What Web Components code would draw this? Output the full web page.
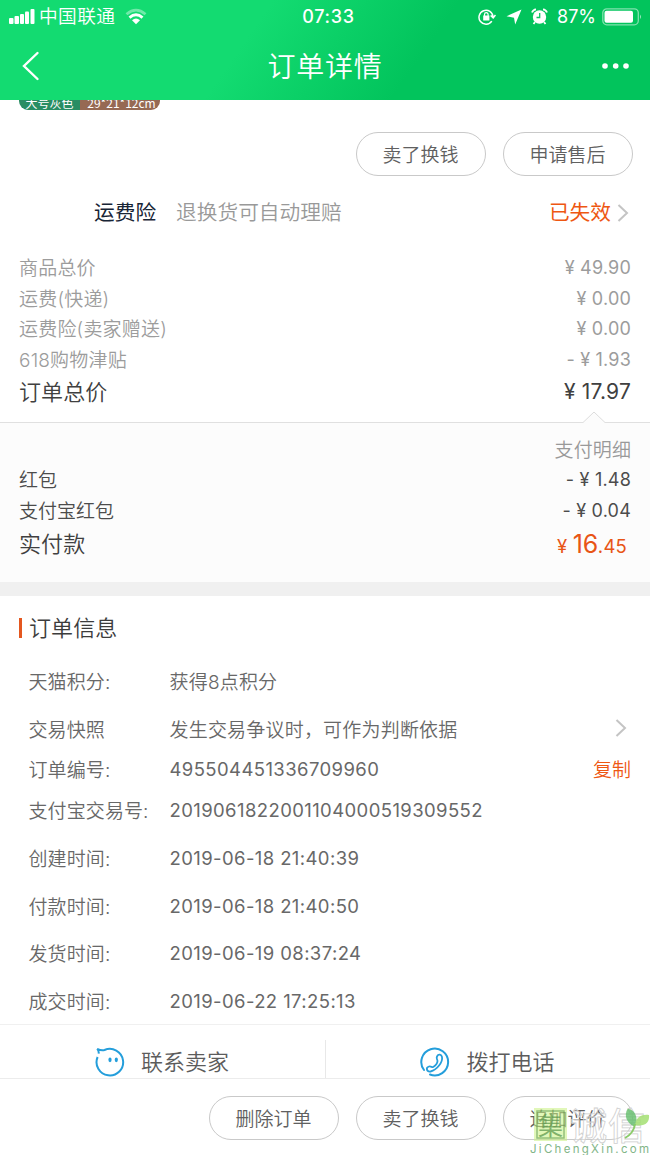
<!DOCTYPE html>
<html lang="zh-CN">
<head>
<meta charset="utf-8">
<title>订单详情</title>
<style>
  body {
    margin: 0;
    width: 650px;
    height: 1155px;
    overflow: hidden;
    background: #fff;
    color: #666;
    font-family: Inter, "Noto Sans CJK SC", sans-serif;
    font-weight: 350;
    font-size: 18px;
  }
</style>
</head>
<body>
<order-page></order-page>

<script>
// Attach an open shadow root with the given markup
function render(el, html) {
  el.attachShadow({ mode: "open" }).innerHTML = html;
}

class StatusBar extends HTMLElement {
  constructor() {
    super();
    render(this, `
      <style>
        :host {
          display: grid;
          grid-template-columns: 1fr auto 1fr;
          align-items: center;
          height: 32px;
          padding: 0 8px 0 9px;
          color: #fff;
          font-size: 18px;
          line-height: 32px;
        }
        div { display: flex; align-items: center; }
        .carrier { margin-left: 4px; font-size: 18.7px; letter-spacing: .4px; }
        .wifi { margin-left: 10px; }
        .time { font-weight: 500; letter-spacing: .7px; padding-left: 6px; padding-top: 1px; }
        .right { justify-content: flex-end; }
        .percent { margin: 1px 6px 0 9px; font-weight: 400; letter-spacing: 0; }
        svg { display: block; flex: none; }
      </style>
      <div>
        <svg width="26" height="17" fill="#fff">
          <rect x="0" y="10" width="4.5" height="6" rx="1"/>
          <rect x="5.5" y="8" width="4.5" height="8" rx="1"/>
          <rect x="11" y="6" width="4" height="10" rx="1"/>
          <rect x="16" y="3.500" width="4" height="12.500" rx="1"/>
          <rect x="21.500" y="1" width="4" height="15" rx="1"/>
        </svg>
        <span class="carrier">中国联通</span>
        <svg class="wifi" width="22" height="17" viewBox="0 0 22 17" fill="none" stroke="#fff" stroke-width="2.800">
          <path d="M1.500 6.200Q11 -2 20.500 6.200" opacity=".4"/>
          <path d="M4.500 9.600Q11 3.800 17.500 9.600"/>
          <path d="M7 12.200Q11 8.800 15 12.200L11 16.200Z" fill="#fff" stroke="none"/>
        </svg>
      </div>
      <div class="time">07:33</div>
      <div class="right">
        <svg width="18" height="18" viewBox="0 0 18 18" fill="none" stroke="#fff" stroke-width="1.500">
          <path d="M13.800 13.200A7 7 0 1 1 15 9M12.600 7.500L15.200 9.800L17.500 7"/>
          <rect x="5.200" y="7.500" width="6.200" height="5" fill="#fff" stroke="none"/>
          <path d="M6.500 8V6.500a1.800 1.800 0 0 1 3.600 0V8" stroke-width="1.200"/>
        </svg>
        <svg width="16" height="16" viewBox="0 0 16 16" fill="#fff" style="margin-left:10px"><path d="M15.500 .5L9.200 15.500L8 8.800L.5 7.200Z"/></svg>
        <svg width="17" height="17" viewBox="0 0 17 17" style="margin-left:9px">
          <circle cx="8.500" cy="9" r="6.700" fill="#fff"/>
          <path d="M1 4.500Q2 1.600 5 1.300M16 4.500Q15 1.600 12 1.300M4 14l-1.500 2M13 14l1.500 2" stroke="#fff" stroke-width="1.800" fill="none"/>
          <path d="M8.700 5v4.500H5.500" stroke="#0ac762" stroke-width="1.300" fill="none"/>
        </svg>
        <span class="percent">87%</span>
        <svg width="40" height="18" viewBox="0 0 40 18">
          <rect x=".8" y=".8" width="35.500" height="16" rx="4" fill="none" stroke="#fff" stroke-opacity=".5" stroke-width="1.300"/>
          <rect x="2.500" y="2.800" width="28.500" height="12" rx="2" fill="#fff"/>
          <path d="M38 6.500q2 2.300 0 4.600z" fill="#fff" fill-opacity=".6"/>
        </svg>
      </div>
    `);
  }
}

class NavBar extends HTMLElement {
  constructor() {
    super();
    render(this, `
      <style>
        :host {
          display: grid;
          grid-template-columns: 1fr auto 1fr;
          align-items: center;
          height: 68px;
          padding: 0 20px 0 22px;
          color: #fff;
        }
        h1 { margin: 0; padding-top: 2px; font-size: 28px; font-weight: 350; letter-spacing: .8px; line-height: 66px; margin-left: -2px; }
        .more { justify-self: end; }
        svg { display: block; }
      </style>
      <svg width="18" height="30" fill="none" stroke="#fff" stroke-width="2.400" stroke-linecap="round"><path d="M15.500 2L2 15L15.500 28"/></svg>
      <h1><slot></slot></h1>
      <svg class="more" width="30" height="8" fill="#fff"><circle cx="5" cy="4" r="2.800"/><circle cx="15.700" cy="4" r="2.800"/><circle cx="26" cy="4" r="2.800"/></svg>
    `);
  }
}

class PillButton extends HTMLElement {
  constructor() {
    super();
    render(this, `
      <style>
        :host {
          display: block;
          box-sizing: border-box;
          width: 130px;
          height: 44px;
          border: 1px solid #c9c9c9;
          border-radius: 22px;
          color: #606060;
          font-size: 19px;
          line-height: 45px;
          text-align: center;
          text-indent: -1px;
        }
      </style>
      <slot></slot>
    `);
  }
}

class ChevronRight extends HTMLElement {
  constructor() {
    super();
    render(this, `
      <style>
        :host { display: block; }
        svg { display: block; }
      </style>
      <svg width="12" height="20" fill="none" stroke="#c4c4c4" stroke-width="2"><path d="M1.500 2L10 10L1.500 18"/></svg>
    `);
  }
}

// Label on the left, amount on the right
class PriceRow extends HTMLElement {
  constructor() {
    super();
    render(this, `
      <style>
        :host {
          display: flex;
          justify-content: space-between;
          height: 30.5px;
          line-height: 30.5px;
          padding: 0 19px;
          color: #9c9c9c;
          font-size: 19px;
        }
        .label { padding-top: 1px; letter-spacing: .2px; }
        .value { font-size: 18px; font-weight: 400; letter-spacing: .2px; }
        :host([dark]) { color: #4c4c4c; }
        :host([dark]) .label { letter-spacing: 0; }
        :host([total]) { height: 34px; line-height: 34px; color: #404040; font-size: 22px; }
        :host([total]) .label { padding-top: 0; letter-spacing: .1px; }
        :host([total]) .value { font-size: 21px; margin-top: -.5px; letter-spacing: .2px; }
      </style>
      <span class="label"><slot></slot></span>
      <span class="value"><slot name="value"></slot></span>
    `);
  }
}

class InfoRow extends HTMLElement {
  constructor() {
    super();
    render(this, `
      <style>
        :host {
          display: grid;
          grid-template-columns: 141px 1fr auto;
          align-items: center;
          height: 47.7px;
          padding: 0 19px 0 29px;
          color: #686868;
          font-size: 19px;
        }
        .label, .value { white-space: nowrap; }
        .label { text-indent: -.5px; letter-spacing: .1px; padding-top: 1px; }
        .value { padding-top: 2px; font-size: 18.5px; font-weight: 400; letter-spacing: .4px; text-indent: -.5px; }
        :host([words]) .value { padding-top: 1px; font-size: 19px; font-weight: 350; letter-spacing: .2px; }
      </style>
      <span class="label"><slot name="label"></slot></span>
      <span class="value"><slot></slot></span>
      <slot name="action"></slot>
    `);
  }
}

class ContactButton extends HTMLElement {
  constructor() {
    super();
    render(this, `
      <style>
        :host {
          display: flex;
          align-items: center;
          justify-content: center;
          gap: 16px;
          box-sizing: border-box;
          height: 38px;
          padding: 6px 1px 0 0;
          color: #5c5c5c;
          font-size: 22px;
          line-height: 32px;
        }
      </style>
      <slot name="icon"></slot>
      <span><slot></slot></span>
    `);
  }
}

class SiteMark extends HTMLElement {
  constructor() {
    super();
    render(this, `
      <style>
        :host {
          position: absolute;
          left: 530px;
          top: 1105px;
          width: 120px;
          height: 50px;
          overflow: hidden;
        }
        svg { display: block; }
      </style>
      <svg width="120" height="50" font-family="'Noto Sans CJK SC', sans-serif">
        <rect x="4" y="3" width="33" height="33" fill="#c8f080" opacity=".55"/>
        <rect x="7" y="6" width="27" height="27" fill="none" stroke="#609a50" stroke-width="1.500" opacity=".6"/>
        <text x="8" y="30" font-size="25" font-weight="400" fill="#609a50" opacity=".75">集</text>
        <g fill="#fff" fill-opacity=".35" stroke="#cfcfcf" stroke-width=".8" font-weight="500" font-size="37">
          <text x="40" y="35">诚</text>
          <text x="78" y="35">信</text>
        </g>
        <path d="M99 4C107 6 108 14 105 20C98 17 95 10 99 4Z" transform="translate(-15 -1) scale(1.14)" fill="#63be6c" opacity=".8"/>
        <path d="M105 20C106 11 113 9 119 10C120 18 114 22 105 20Z" fill="#a3df72" opacity=".85"/>
        <path d="M105 19Q104 28 95 33" fill="none" stroke="#8acb68" stroke-width="2"/>
        <text x="0" y="48" font-family="Inter, sans-serif" font-weight="400" font-size="11.500" textLength="119" fill="#82b588">JiChengXin.com</text>
      </svg>
    `);
  }
}

class OrderPage extends HTMLElement {
  constructor() {
    super();
    render(this, `
      <style>
        :host { display: flex; flex-direction: column; position: relative; width: 650px; height: 1155px; }
        header { background: linear-gradient(125deg, #13db71 38%, #02c45c 64%); }

        main { display: flex; flex-direction: column; height: 924px; overflow: hidden; }
        .tag {
          display: flex;
          flex: none;
          width: 141px;
          height: 20px;
          margin: -10px 0 0 19px;
          border-radius: 9px;
          overflow: hidden;
          color: #fff;
          font-family: "Noto Sans CJK SC", sans-serif;
          font-size: 12px;
          font-weight: 400;
          line-height: 25px;
          text-align: center;
          white-space: nowrap;
        }
        .tag span { flex: 0 0 61px; background: #288d63; }
        .tag span + span { flex: 1; background: #966953; text-indent: 3px; }

        .actions { display: flex; justify-content: flex-end; gap: 17px; padding: 22px 17px 0 0; }
        .insurance { display: flex; align-items: center; height: 40px; margin-top: 17px; padding: 0 21px 0 94px; font-size: 20.7px; line-height: 40px; color: #999; }
        .insurance b { font-weight: 400; color: #172435; margin-right: 20px; }
        .insurance .state { margin: 0 6px 0 auto; color: #ee5712; font-weight: 400; }

        .prices { padding-top: 20px; }
        .paid { position: relative; flex: none; height: 160px; margin-top: 13px; border-top: 1px solid #e0e0e0; background: #fcfcfc; box-sizing: border-box; }
        .paid .notch { position: absolute; left: 583px; top: -12px; }
        .paid .caption { margin: 0; padding: 13px 19px 0; font-size: 19px; line-height: 29px; color: #999; text-align: right; letter-spacing: .1px; }
        .paid price-row[total] { line-height: 37px; }
        .sum { font-size: 18.5px; color: #e85516; letter-spacing: .2px; margin-right: 4px; }
        .sum big { font-size: 25px; letter-spacing: -.3px; }

        .gap { flex: none; height: 14px; background: #f0f0f0; }
        h2 { display: flex; align-items: center; gap: 7px; height: 60px; margin: 0; padding: 0 0 0 19px; font-size: 22px; font-weight: 350; letter-spacing: .1px; color: #3c3c3c; box-sizing: border-box; }
        h2::before { content: ""; width: 3px; height: 20px; margin-top: 4px; background: #e4571f; }
        info-row.tight { height: 34px; }
        .copy { color: #ee5712; }

        .contacts { display: grid; grid-template-columns: 1fr 1fr; padding-top: 15px; height: 38px; border-top: 1px solid #f0f0f0; border-bottom: 1px solid #ececec; }
        .contacts contact-button + contact-button { border-left: 1px solid #e8e8e8; }
        footer { display: flex; justify-content: flex-end; gap: 17px; padding: 17px 17px 0 0; }
      </style>
      <header>
        <status-bar></status-bar>
        <nav-bar>订单详情</nav-bar>
      </header>
      <main>
        <div class="tag"><span>大号灰色</span><span>29*21*12cm</span></div>
        <div class="actions">
          <pill-button>卖了换钱</pill-button>
          <pill-button>申请售后</pill-button>
        </div>
        <div class="insurance"><b>运费险</b><span>退换货可自动理赔</span><span class="state">已失效</span><chevron-right></chevron-right></div>
        <section class="prices">
          <price-row>商品总价<span slot="value">¥ 49.90</span></price-row>
          <price-row>运费(快递)<span slot="value">¥ 0.00</span></price-row>
          <price-row>运费险(卖家赠送)<span slot="value">¥ 0.00</span></price-row>
          <price-row>618购物津贴<span slot="value">- ¥ 1.93</span></price-row>
          <price-row total>订单总价<span slot="value">¥ 17.97</span></price-row>
        </section>
        <section class="paid">
          <svg class="notch" width="22" height="13"><path d="M0 11.500L11 1L22 11.500V13H0Z" fill="#fcfcfc"/><path d="M0 11.500L11 1L22 11.500" fill="none" stroke="#dcdcdc"/></svg>
          <p class="caption">支付明细</p>
          <price-row dark>红包<span slot="value">- ¥ 1.48</span></price-row>
          <price-row dark>支付宝红包<span slot="value">- ¥ 0.04</span></price-row>
          <price-row total>实付款<span slot="value" class="sum">¥ <big>16</big>.45</span></price-row>
        </section>
        <div class="gap"></div>
        <h2>订单信息</h2>
        <info-row words><span slot="label">天猫积分:</span>获得8点积分</info-row>
        <info-row words><span slot="label">交易快照</span>发生交易争议时，可作为判断依据<chevron-right slot="action" style="margin-right:4px"></chevron-right></info-row>
        <info-row class="tight"><span slot="label">订单编号:</span>495504451336709960<span slot="action" class="copy">复制</span></info-row>
        <info-row><span slot="label">支付宝交易号:</span>2019061822001104000519309552</info-row>
        <info-row><span slot="label">创建时间:</span>2019-06-18 21:40:39</info-row>
        <info-row><span slot="label">付款时间:</span>2019-06-18 21:40:50</info-row>
        <info-row><span slot="label">发货时间:</span>2019-06-19 08:37:24</info-row>
        <info-row><span slot="label">成交时间:</span>2019-06-22 17:25:13</info-row>
      </main>
      <div class="contacts">
        <contact-button>
          <svg slot="icon" width="30" height="30" fill="none" stroke="#249edb" stroke-width="2">
            <path d="M2.600 10A13.300 13.300 0 1 0 9.500 3Q6.500 4 2.200 1.800Q4.200 4 3.600 6.600"/>
            <ellipse cx="15" cy="12.800" rx="1.600" ry="2.400" fill="#249edb" stroke="none"/>
            <ellipse cx="21.300" cy="12.800" rx="1.600" ry="2.400" fill="#249edb" stroke="none"/>
          </svg>联系卖家
        </contact-button>
        <contact-button>
          <svg slot="icon" width="30" height="30" fill="none" stroke="#249edb" stroke-width="2" stroke-linecap="round">
            <path d="M4 23A13.400 13.400 0 1 1 10 27.500"/>
            <path d="M17 9.500C18.500 6.500 21.500 7.500 22 10C23 15 17 23 10.500 24.500C6.500 25 5.500 20.500 9 19.500C11 19 12 20.500 13.200 20C15.500 18.500 17.500 16 17.500 14C17.300 12 16 11.500 17 9.500Z" stroke-width="1.800"/>
          </svg>拨打电话
        </contact-button>
      </div>
      <footer>
        <pill-button>删除订单</pill-button>
        <pill-button>卖了换钱</pill-button>
        <pill-button>追加评价</pill-button>
      </footer>
      <site-mark></site-mark>
    `);
  }
}

customElements.define("status-bar", StatusBar);
customElements.define("nav-bar", NavBar);
customElements.define("pill-button", PillButton);
customElements.define("chevron-right", ChevronRight);
customElements.define("price-row", PriceRow);
customElements.define("info-row", InfoRow);
customElements.define("contact-button", ContactButton);
customElements.define("site-mark", SiteMark);
customElements.define("order-page", OrderPage);
</script>
</body>
</html>
